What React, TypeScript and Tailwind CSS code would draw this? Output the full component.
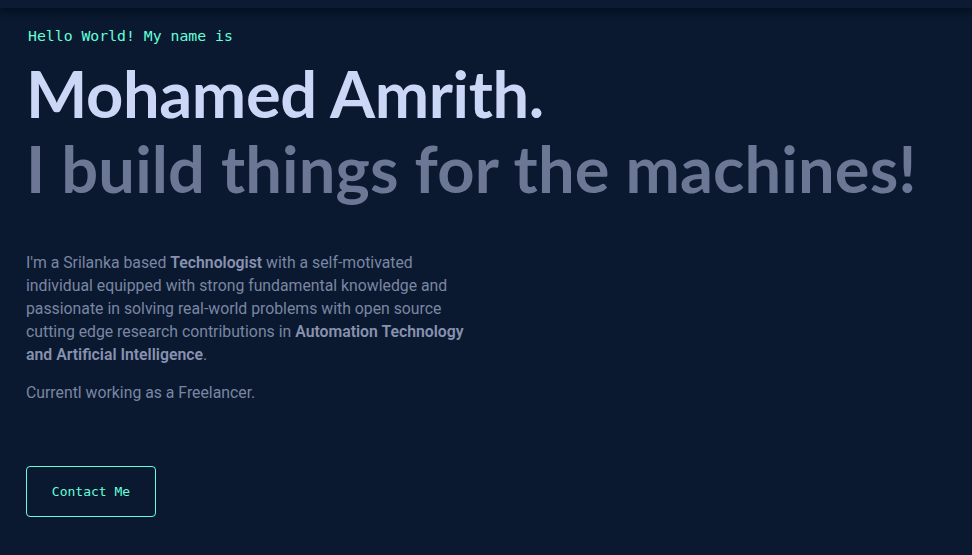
export default function App() {
  return (
    <div className="min-h-screen bg-[#0a192f] text-[#8892b0]">
      <div className="h-2 bg-[#0c1b31] shadow-[0_4px_6px_rgba(2,12,27,0.7)]" />

      <section className="px-[26px] pt-[18px]">
        <p className="ml-[2px] font-['DejaVu_Sans_Mono',monospace] text-[14.8px] leading-5 text-[#64ffda]">
          Hello World! My name is
        </p>

        <h1 className="mt-[14px] whitespace-nowrap font-['Lato',sans-serif] text-[65px] font-bold leading-[66px] tracking-[-0.006em] text-[#ccd6f6]">
          Mohamed Amrith.
        </h1>
        <h2 className="mt-[9px] whitespace-nowrap font-['Lato',sans-serif] text-[65px] font-bold leading-[66px] tracking-[0.002em] text-[#6b7794]">
          I build things for the machines!
        </h2>

        <div className="mt-[50px] max-w-[450px] font-['Roboto',sans-serif] text-[15.8px] leading-[23px] text-[#7a86a3]">
          <p>
            I'm a Srilanka based <b className="font-semibold text-[#8892b0]">Technologist</b> with a
            self-motivated individual equipped with strong fundamental knowledge and passionate in
            solving real-world problems with open source cutting edge research contributions in{" "}
            <b className="font-semibold text-[#8892b0]">Automation Technology and Artificial Intelligence</b>.
          </p>
          <p className="mt-[15px]">Currentl working as a Freelancer.</p>
        </div>

        <button className="mt-[62px] h-[51px] w-[130px] rounded-[4px] border border-[#64ffda] font-['DejaVu_Sans_Mono',monospace] text-[13px] text-[#64ffda]">
          Contact Me
        </button>
      </section>
    </div>
  );
}
